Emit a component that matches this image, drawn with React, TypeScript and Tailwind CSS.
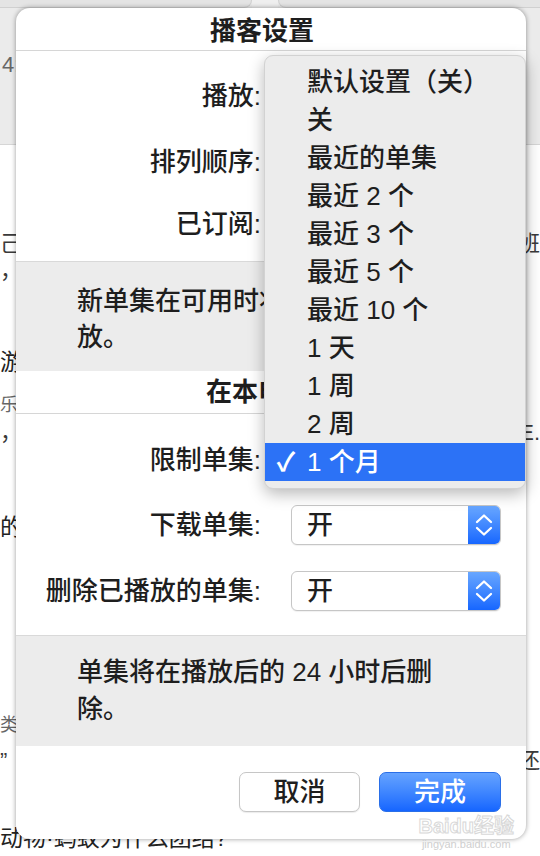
import React from "react";

const FONT = "font-['Liberation_Sans','Noto_Sans_CJK_SC',sans-serif]";

function Chevrons() {
  return (
    <svg width="20" height="28" viewBox="0 0 20 28" fill="none">
      <path d="M3 11 L10 4.5 L17 11" stroke="white" strokeWidth="2.3" strokeLinecap="round" strokeLinejoin="round" />
      <path d="M3 17 L10 23.5 L17 17" stroke="white" strokeWidth="2.3" strokeLinecap="round" strokeLinejoin="round" />
    </svg>
  );
}

function Popup({ value }: { value: string }) {
  return (
    <div className="flex h-[40px] w-[210px] overflow-hidden rounded-[6px] border border-[#c6c6c6] bg-white shadow-[0_1px_1px_rgba(0,0,0,0.06)]">
      <div className="flex flex-1 items-center pl-[15px] text-[26px] font-medium leading-none text-[#1e1e1e]">{value}</div>
      <div className="flex w-[32px] items-center justify-center bg-gradient-to-b from-[#68a6ff] to-[#1666ff]">
        <Chevrons />
      </div>
    </div>
  );
}

function Row({ label, value, mt }: { label: string; value: string; mt: string }) {
  return (
    <div className={`flex h-[40px] items-center ${mt}`}>
      <div className="w-[245px] text-right text-[26px] font-medium leading-none text-[#1e1e1e]">{label}</div>
      <div className="ml-[30px]">
        <Popup value={value} />
      </div>
    </div>
  );
}

const menuItems = [
  "默认设置（关）",
  "关",
  "最近的单集",
  "最近 2 个",
  "最近 3 个",
  "最近 5 个",
  "最近 10 个",
  "1 天",
  "1 周",
  "2 周",
  "1 个月",
];

function Menu() {
  return (
    <div className="absolute left-[248px] top-[47px] z-20 w-[262px] rounded-[9px] border border-[#d2d2d2] bg-[#ececec] pt-[7px] pb-[7px] shadow-[0_5px_16px_rgba(0,0,0,0.28)]">
      {menuItems.map((t, i) => {
        const sel = i === menuItems.length - 1;
        return (
          <div
            key={t}
            className={
              sel
                ? "flex h-[38px] items-center bg-[#2c72f6] text-white"
                : "flex h-[38px] items-center text-[#1e1e1e]"
            }
          >
            <span className="flex w-[42px] justify-center text-[26px] font-bold leading-none">{sel ? "✓" : ""}</span>
            <span className="text-[26px] font-medium leading-none">{t}</span>
          </div>
        );
      })}
    </div>
  );
}

function BgRow({ left, right, mt, cls }: { left: string; right?: string; mt: string; cls?: string }) {
  return (
    <div className={`flex h-[24px] items-center justify-between whitespace-nowrap ${mt} ${cls ?? "text-[22px] text-[#3a3a3a]"}`}>
      <span>{left}</span>
      {right ? <span>{right}</span> : null}
    </div>
  );
}

export default function App() {
  return (
    <div className={`relative h-[856px] w-[540px] overflow-hidden bg-white ${FONT}`}>
      {/* background page */}
      <div className="flex flex-col">
        <div className="h-[145px] border-b border-[#d6d6d6] bg-[#ebebeb]">
          <div className="flex h-[8px]">
            <div className="w-[252px] rounded-br-[10px] border-b border-r border-[#d0d0d0] bg-[#e4e4e4]" />
            <div className="flex-1 bg-[#efefef]" />
            <div className="w-[262px] rounded-bl-[10px] border-b border-l border-[#d0d0d0] bg-[#e4e4e4]" />
          </div>
          <div className="mt-[46px] pl-[2px] text-[22px] leading-[22px] text-[#666]">4:01</div>
        </div>
        <BgRow mt="mt-[86px]" left="己。" right="班" />
        <BgRow mt="mt-[3px]" left="，" />
        <BgRow mt="mt-[68px]" left="游" cls="text-[23px] text-[#222]" />
        <BgRow mt="mt-[19px]" left="乐" cls="text-[18px] text-[#666]" />
        <BgRow mt="mt-[3px]" left="，" right="E." />
        <BgRow mt="mt-[71px]" left="的" cls="text-[23px] text-[#222]" />
        <BgRow mt="mt-[174px]" left="类" cls="text-[18px] text-[#666]" />
        <BgRow mt="mt-[11px]" left="”" right="还" />
        <BgRow mt="mt-[54px]" left="动物·蚂蚁为什么团结?" cls="text-[23px] text-[#222]" />
      </div>

      {/* dialog sheet */}
      <div className="absolute left-[16px] top-[8px] z-10 w-[510px] rounded-[14px] bg-white shadow-[0_0_5px_rgba(0,0,0,0.4)]">
        <div className="flex h-[42px] items-center justify-center pr-[18px] pt-[3px] text-[26px] font-bold leading-none text-[#1e1e1e]">
          播客设置
        </div>
        <div className="h-[211px] border-t border-[#d6d6d6] pt-[25px]">
          <Row label="播放:" value="默认" mt="" />
          <Row label="排列顺序:" value="最新" mt="mt-[26px]" />
          <Row label="已订阅:" value="开" mt="mt-[22px]" />
        </div>
        <div className="h-[110px] border-t border-[#d9d9d9] bg-[#ececec] pl-[61px] pt-[21px]">
          <p className="w-[372px] text-[26px] font-medium leading-[36px] text-[#1e1e1e]">新单集在可用时将自动下载并播放。</p>
        </div>
        <div className="flex h-[42px] items-center justify-center text-[26px] font-bold leading-none text-[#1e1e1e]">
          在本电脑上
        </div>
        <div className="h-[222px] border-t border-[#d6d6d6] pt-[26px]">
          <Row label="限制单集:" value="1 个月" mt="" />
          <Row label="下载单集:" value="开" mt="mt-[25px]" />
          <Row label="删除已播放的单集:" value="开" mt="mt-[26px]" />
        </div>
        <div className="h-[111px] border-t border-[#d9d9d9] bg-[#ececec] pl-[61px] pt-[18px]">
          <p className="w-[372px] text-[26px] font-medium leading-[37px] text-[#1e1e1e]">单集将在播放后的 24 小时后删除。</p>
        </div>
        <div className="relative flex h-[93px] justify-end gap-[19px] pr-[25px] pt-[26px]">
          <div className="flex h-[40px] w-[121px] items-center justify-center rounded-[7px] border border-[#c6c6c6] bg-white text-[26px] font-medium leading-none text-[#1e1e1e] shadow-[0_1px_1px_rgba(0,0,0,0.08)]">
            取消
          </div>
          <div className="flex h-[40px] w-[122px] items-center justify-center rounded-[7px] border border-[#2a6fe8] bg-gradient-to-b from-[#65a3ff] to-[#1565ff] text-[26px] font-medium leading-none text-white">
            完成
          </div>
          <div className="absolute right-[12px] top-[70px] flex flex-col items-center leading-none">
            <span className="text-[20px] font-bold text-white/80 [-webkit-text-stroke:1px_#d8d8d8]">Baidu经验</span>
            <span className="mt-[3px] text-[11px] text-[#cfcfcf]">jingyan.baidu.com</span>
          </div>
        </div>
        <Menu />
      </div>
    </div>
  );
}
